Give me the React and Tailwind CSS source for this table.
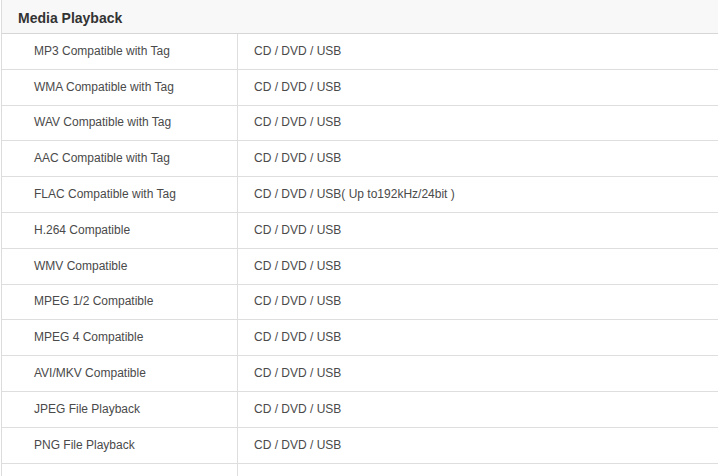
import React from "react";

const rows = [
  ["MP3 Compatible with Tag", "CD / DVD / USB"],
  ["WMA Compatible with Tag", "CD / DVD / USB"],
  ["WAV Compatible with Tag", "CD / DVD / USB"],
  ["AAC Compatible with Tag", "CD / DVD / USB"],
  ["FLAC Compatible with Tag", "CD / DVD / USB( Up to192kHz/24bit )"],
  ["H.264 Compatible", "CD / DVD / USB"],
  ["WMV Compatible", "CD / DVD / USB"],
  ["MPEG 1/2 Compatible", "CD / DVD / USB"],
  ["MPEG 4 Compatible", "CD / DVD / USB"],
  ["AVI/MKV Compatible", "CD / DVD / USB"],
  ["JPEG File Playback", "CD / DVD / USB"],
  ["PNG File Playback", "CD / DVD / USB"],
  ["", ""],
];

const App = () => {
  return (
    <div className="w-full h-screen overflow-hidden bg-white font-['Liberation_Sans',Arial,sans-serif]">
      <div className="ml-px border-l border-[#dcdcdc]">
        {/* section header */}
        <div className="h-[34px] bg-[#f8f8f8] border-b border-[#d6d6d6] pl-[16px] pt-[6px]">
          <span className="text-[14px] font-bold text-[#333]">Media Playback</span>
        </div>

        {rows.map(([name, value], i) => (
          <div
            key={i}
            className="grid grid-cols-[236px_1fr] h-[35.8px] border-b border-[#dedede]"
          >
            <div className="flex items-center pl-[32px] pb-[1px] border-r border-[#dedede] text-[12px] text-[#4a4a4a]">
              {name}
            </div>
            <div className="flex items-center pl-[16px] pb-[1px] text-[12px] text-[#4a4a4a]">
              {value}
            </div>
          </div>
        ))}
      </div>
    </div>
  );
};

export default App;
